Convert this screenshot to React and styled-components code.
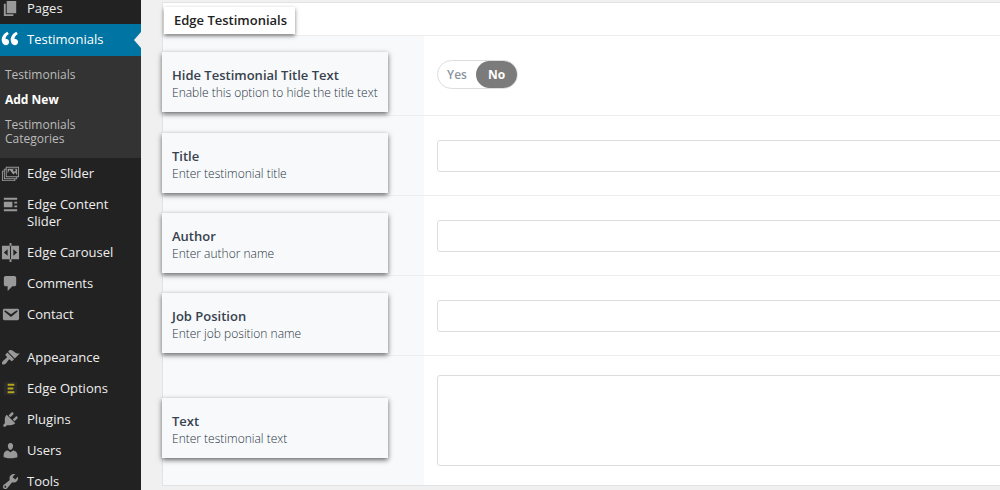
import React, { useState } from "react";
import styled, { createGlobalStyle, css } from "styled-components";

const GlobalStyle = createGlobalStyle`
  *, *::before, *::after { box-sizing: border-box; }
  body {
    margin: 0;
    background: #f0f0f0;
    font-family: "Open Sans", "Noto Sans", sans-serif;
    font-size: 13px;
    overflow: hidden;
  }
`;

const Page = styled.div`
  display: flex;
  height: 100vh;
  overflow: hidden;
`;

/* ---------- admin menu ---------- */

const Sidebar = styled.nav`
  flex: 0 0 141px;
  background: #222;
  overflow: hidden;
`;

const Menu = styled.ul`
  list-style: none;
  margin: -7px 0 0;
  padding: 0;
`;

const MenuItem = styled.li`
  margin-top: ${(p) => (p.$separated ? "12px" : "0")};
`;

const MenuLink = styled.a`
  display: flex;
  align-items: flex-start;
  position: relative;
  min-height: 31px;
  padding: 7px 8px 7px 1px;
  color: #eee;
  line-height: 17px;
  text-decoration: none;

  ${(p) =>
    p.$current &&
    css`
      min-height: 32px;
      background: #0074a2;
      color: #fff;

      &::after {
        content: "";
        position: absolute;
        right: 0;
        top: 8px;
        border: 8px solid transparent;
        border-left-width: 0;
        border-right: 7px solid #f0f0f0;
      }
    `}
`;

const MenuIcon = styled.svg`
  flex: none;
  width: 19px;
  height: 19px;
  margin: -1px 7px -1px 0;
  fill: ${(p) => (p.$current ? "#fff" : "#999")};
`;

const Submenu = styled.ul`
  list-style: none;
  margin: 0;
  padding: 12px 0;
  background: #333;
`;

const SubLink = styled.a`
  display: block;
  padding: 0 40px 0 5px;
  margin-bottom: ${(p) => (p.$last ? "0" : "11px")};
  color: ${(p) => (p.$active ? "#fff" : "#bbb")};
  font-size: 12px;
  font-weight: ${(p) => (p.$active ? 700 : 400)};
  line-height: 14px;
  text-decoration: none;
`;

/* ---------- meta box ---------- */

const Main = styled.main`
  flex: 1;
  min-width: 0;
  padding: 2px 0 4px 21px;
  overflow: hidden;
`;

const Panel = styled.section`
  margin-right: -40px;
  background: #fff;
  border: 1px solid #e3e3e3;
`;

const PanelHeader = styled.header`
  display: flex;
  padding: 4px 1px 1px;
  border-bottom: 1px solid #eee;
`;

const PanelTitle = styled.h2`
  position: relative;
  margin: 0;
  padding: 0 8px 1px 10px;
  background: #fff;
  box-shadow: 0 2px 4px rgba(0, 0, 0, 0.5);
  color: #222;
  font-size: 13px;
  font-weight: 600;
  line-height: 26px;
`;

const Row = styled.div`
  display: grid;
  grid-template-columns: 261px 1fr;
  min-height: ${(p) => (p.$tall ? "129px" : "80px")};
  border-bottom: 1px solid #eee;

  &:last-child {
    border-bottom: 0;
  }
`;

const LabelCell = styled.div`
  display: flex;
  align-items: center;
  padding: 15px 0 ${(p) => (p.$toggle ? "3px" : "0")};
  background: #f7f9fb;
`;

const LabelCard = styled.div`
  position: relative;
  width: 226px;
  height: 60px;
  margin-left: -1px;
  padding: 14px 10px 0;
  background: #f7f9fb;
  box-shadow: 0 2px 5px rgba(0, 0, 0, 0.6);
`;

const FieldName = styled.label`
  display: block;
  color: #37424e;
  font-size: 13px;
  font-weight: 600;
  line-height: 18px;
`;

const FieldHint = styled.p`
  margin: 0;
  color: #2a3340;
  font-size: 12px;
  font-weight: 300;
  line-height: 17px;
  white-space: nowrap;
`;

const ControlCell = styled.div`
  display: flex;
  align-items: center;
  padding: 0 20px ${(p) => (p.$toggle ? "3px" : "0")} 13px;
`;

const fieldBox = css`
  display: block;
  width: 100%;
  margin: 0;
  padding: 6px 10px;
  border: 1px solid #ddd;
  border-radius: 3px;
  background: #fff;
  color: #333;
  font: inherit;
  outline: none;
`;

const TextInput = styled.input`
  ${fieldBox}
  height: 32px;
`;

const TextArea = styled.textarea`
  ${fieldBox}
  height: 91px;
  resize: none;
`;

const Switch = styled.div`
  display: flex;
  height: 29px;
  border: 1px solid #ddd;
  border-radius: 15px;
`;

const SwitchOption = styled.label`
  display: flex;
  align-items: center;
  justify-content: center;
  width: ${(p) => (p.$on ? "41px" : "38px")};
  border-radius: 14px;
  background: ${(p) => (p.$on ? "#7b7b7b" : "transparent")};
  color: ${(p) => (p.$on ? "#fff" : "#8a949c")};
  font-size: 12px;
  font-weight: ${(p) => (p.$on ? 700 : 600)};
  cursor: pointer;
`;

const SwitchRadio = styled.input`
  appearance: none;
  width: 0;
  height: 0;
  margin: 0;
`;

const icons = {
  pages: <path d="M6 15V2h10v13H6zm-1 1h8v2H3V5h2v11z" />,
  quote: (
    <path d="M8.54 12.74c0-.87-.24-1.61-.72-2.22-.73-.92-2.14-1.03-2.96-.85-.34-1.93 1.3-4.39 3.42-5.45L6.65 1.94C3.45 3.46.31 6.96.85 11.37 1.19 14.16 2.8 16 5.08 16c1 0 1.83-.29 2.48-.88.66-.59.98-1.38.98-2.38zm9.43 0c0-.87-.24-1.61-.72-2.22-.73-.92-2.14-1.03-2.96-.85-.34-1.93 1.3-4.39 3.42-5.45l-1.63-2.28c-3.2 1.52-6.34 5.02-5.8 9.43.34 2.79 1.95 4.63 4.23 4.63 1 0 1.83-.29 2.48-.88.66-.59.98-1.38.98-2.38z" />
  ),
  slider: (
    <path
      fillRule="evenodd"
      d="M5 3h14v11h-2v2h-2v2H1V7h2V5h2V3zm1 1v9h12V4H6zM4 6v9h12v-1H5V6H4zM2 8v9h12v-1H3V8H2zM7 5h10v7l-2-3-2 2-4-5-2 4V5zm7 3a1.4 1.4 0 1 0 0-2.8A1.4 1.4 0 0 0 14 8z"
    />
  ),
  content: <path d="M3 5h14V3H3v2zm9 8V7H3v6h9zm2-4h3V7h-3v2zm0 4h3v-2h-3v2zM3 17h14v-2H3v2z" />,
  carousel: (
    <path
      fillRule="evenodd"
      d="M19 3v14h-8v3H9v-3H1V3h8V0h2v3h8zm-8.5 14V3h-1v14h1zM7 6.5L3 10l4 3.5v-7zM17 10l-4-3.5v7z"
    />
  ),
  comments: <path d="M5 2h9c1.1 0 2 .9 2 2v7c0 1.1-.9 2-2 2h-2l-5 5v-5H5c-1.1 0-2-.9-2-2V4c0-1.1.9-2 2-2z" />,
  mail: (
    <path d="M3.87 4h13.25C18.37 4 19 4.59 19 5.79v8.42c0 1.19-.63 1.79-1.88 1.79H3.87c-1.25 0-1.88-.6-1.88-1.79V5.79c0-1.2.63-1.79 1.88-1.79zm6.62 8.6l6.74-5.53c.24-.2.43-.66.13-1.07-.29-.41-.82-.42-1.17-.17l-5.7 3.86L4.8 5.83c-.35-.25-.88-.24-1.17.17-.3.41-.11.87.13 1.07z" />
  ),
  brush: (
    <path d="M14.48 11.06L7.41 3.99l1.5-1.5c.5-.56 2.3-.47 3.51.32 1.21.8 1.43 1.28 2.91 2.1 1.18.64 2.45 1.26 4.45.85zm-.71.71L6.7 4.7 4.93 6.47c-.39.39-.39 1.02 0 1.41l1.06 1.06c.39.39.39 1.03 0 1.42-.6.6-1.43 1.11-2.21 1.69-.35.26-.7.53-1.01.84C1.43 14.23.4 16.08 1.4 17.07c.99 1 2.84-.03 4.18-1.36.31-.31.58-.66.85-1.02.57-.78 1.08-1.61 1.69-2.21.39-.39 1.02-.39 1.41 0l1.06 1.06c.39.39 1.02.39 1.41 0z" />
  ),
  options: (
    <>
      <rect x="3" y="3" width="14" height="14" fill="#2b2b2b" />
      <path fill="#b5a51a" d="M7 5h7v2H7zM7 9h6v2H7zM7 13h7v2H7z" />
    </>
  ),
  plug: (
    <path d="M13.11 4.36L9.87 7.6 8 5.73l3.24-3.24c.35-.34 1.05-.2 1.56.32.52.51.66 1.21.31 1.55zm-8 1.77l.91-1.12 9.01 9.01-1.19.84c-.71.71-2.63 1.16-3.82 1.16H6.14L4.9 17.26c-.59.59-1.54.59-2.12 0-.59-.58-.59-1.53 0-2.12l1.24-1.24v-3.88c0-1.13.4-3.19 1.09-3.89zm7.26 3.97l3.24-3.24c.34-.35 1.04-.21 1.55.31.52.51.66 1.21.31 1.55l-3.24 3.25z" />
  ),
  user: (
    <path d="M10 9.25c-2.27 0-2.73-3.44-2.73-3.44C7 4.02 7.82 2 9.97 2c2.16 0 2.98 2.02 2.71 3.81 0 0-.41 3.44-2.68 3.44zm0 2.57L12.72 10c2.39 0 4.52 2.33 4.52 4.53v2.49s-3.65 1.13-7.24 1.13c-3.65 0-7.24-1.13-7.24-1.13v-2.49c0-2.25 1.94-4.48 4.47-4.48z" />
  ),
  wrench: (
    <path d="M16.68 9.77c-1.34 1.34-3.3 1.67-4.95.99l-5.41 6.52c-.99.99-2.59.99-3.58 0s-.99-2.59 0-3.57l6.52-5.42c-.68-1.65-.35-3.61.99-4.95 1.28-1.28 3.12-1.62 4.72-1.06l-2.89 2.89 2.82 2.82 2.86-2.87c.53 1.58.18 3.39-1.08 4.65zM3.81 16.21c.4.39 1.04.39 1.43 0 .4-.4.4-1.04 0-1.43-.39-.4-1.03-.4-1.43 0-.39.39-.39 1.03 0 1.43z" />
  ),
};

const menu = [
  { label: "Pages", icon: "pages" },
  {
    label: "Testimonials",
    icon: "quote",
    current: true,
    children: [
      { label: "Testimonials" },
      { label: "Add New", active: true },
      { label: "Testimonials Categories" },
    ],
  },
  { label: "Edge Slider", icon: "slider" },
  { label: "Edge Content Slider", icon: "content" },
  { label: "Edge Carousel", icon: "carousel" },
  { label: "Comments", icon: "comments" },
  { label: "Contact", icon: "mail" },
  { label: "Appearance", icon: "brush", separated: true },
  { label: "Edge Options", icon: "options" },
  { label: "Plugins", icon: "plug" },
  { label: "Users", icon: "user" },
  { label: "Tools", icon: "wrench" },
];

const fields = [
  {
    id: "hide-title",
    name: "Hide Testimonial Title Text",
    hint: "Enable this option to hide the title text",
    type: "toggle",
  },
  { id: "title", name: "Title", hint: "Enter testimonial title", type: "text" },
  { id: "author", name: "Author", hint: "Enter author name", type: "text" },
  { id: "job", name: "Job Position", hint: "Enter job position name", type: "text" },
  { id: "text", name: "Text", hint: "Enter testimonial text", type: "area" },
];

function YesNo({ id }) {
  const [value, setValue] = useState("No");
  return (
    <Switch role="radiogroup" aria-labelledby={`${id}-label`}>
      {["Yes", "No"].map((option) => (
        <SwitchOption key={option} $on={value === option}>
          <SwitchRadio
            type="radio"
            name={id}
            id={option === "Yes" ? id : undefined}
            checked={value === option}
            onChange={() => setValue(option)}
          />
          {option}
        </SwitchOption>
      ))}
    </Switch>
  );
}

function Field({ field }) {
  const toggle = field.type === "toggle";
  return (
    <Row $tall={field.type === "area"}>
      <LabelCell $toggle={toggle}>
        <LabelCard>
          <FieldName id={`${field.id}-label`} htmlFor={field.id}>
            {field.name}
          </FieldName>
          <FieldHint>{field.hint}</FieldHint>
        </LabelCard>
      </LabelCell>
      <ControlCell $toggle={toggle}>
        {toggle && <YesNo id={field.id} />}
        {field.type === "text" && <TextInput id={field.id} type="text" />}
        {field.type === "area" && <TextArea id={field.id} />}
      </ControlCell>
    </Row>
  );
}

export default function App() {
  return (
    <Page>
      <GlobalStyle />
      <Sidebar>
        <Menu>
          {menu.map((item) => (
            <MenuItem key={item.label} $separated={item.separated}>
              <MenuLink href="#" $current={item.current}>
                <MenuIcon viewBox="0 0 20 20" $current={item.current} aria-hidden="true">
                  {icons[item.icon]}
                </MenuIcon>
                <span>{item.label}</span>
              </MenuLink>
              {item.children && (
                <Submenu>
                  {item.children.map((child, i) => (
                    <li key={child.label}>
                      <SubLink href="#" $active={child.active} $last={i === item.children.length - 1}>
                        {child.label}
                      </SubLink>
                    </li>
                  ))}
                </Submenu>
              )}
            </MenuItem>
          ))}
        </Menu>
      </Sidebar>
      <Main>
        <Panel>
          <PanelHeader>
            <PanelTitle>Edge Testimonials</PanelTitle>
          </PanelHeader>
          <div>
            {fields.map((field) => (
              <Field key={field.id} field={field} />
            ))}
          </div>
        </Panel>
      </Main>
    </Page>
  );
}
